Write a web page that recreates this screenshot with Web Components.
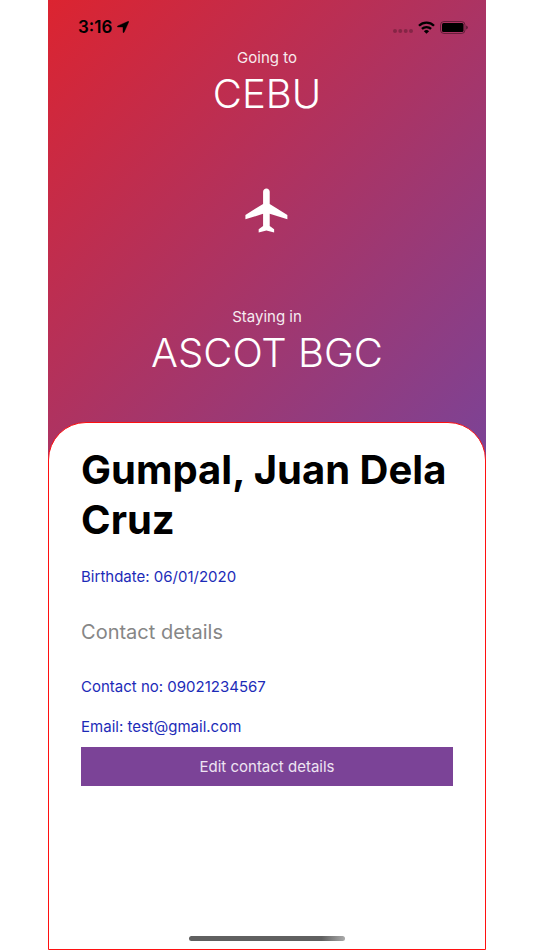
<!DOCTYPE html>
<html lang="en">
<head>
<meta charset="utf-8">
<meta name="viewport" content="width=device-width, initial-scale=1">
<title>Traveller profile</title>
<style>
    body {
        margin: 0;
        background: #fff;
        font-family: Inter, "Liberation Sans", sans-serif;
    }
</style>
</head>
<body>
<phone-screen>
    <trip-header slot="header">
        <status-bar slot="status">3:16</status-bar>
        <trip-place slot="destination">
            <span slot="label">Going to</span>
            <span slot="place">CEBU</span>
        </trip-place>
        <trip-place slot="hotel">
            <span slot="label">Staying in</span>
            <span slot="place">ASCOT BGC</span>
        </trip-place>
    </trip-header>
    <profile-card>
        <span slot="name">Gumpal, Juan Dela Cruz</span>
        <span slot="birthdate">Birthdate: 06/01/2020</span>
        <span slot="heading">Contact details</span>
        <span slot="phone">Contact no: 09021234567</span>
        <span slot="email">Email: test@gmail.com</span>
        <span slot="action">Edit contact details</span>
    </profile-card>
</phone-screen>

<script>
class BaseElement extends HTMLElement {
    constructor() {
        super()
        this.attachShadow({mode: 'open'})
    }

    connectedCallback() {
        const template = document.createElement('template')
        template.innerHTML = this.getStyles() + this.getTemplate()
        this.shadowRoot.replaceChildren(template.content.cloneNode(true))
    }
}

class PhoneScreen extends BaseElement {
    getTemplate() {
        return `
            <slot name="header"></slot>
            <slot></slot>
        `
    }

    getStyles() {
        return `
            <style>
                :host {
                    box-sizing: border-box;
                    display: flex;
                    flex-direction: column;
                    min-height: 100vh;
                    padding: 0 9%;
                }
            </style>
        `
    }
}

class StatusBar extends BaseElement {
    getTemplate() {
        return `
            <div class="time">
                <slot></slot>
                <svg width="12" height="12" viewBox="0 0 12 12" aria-hidden="true">
                    <path d="M11.3.3Q12 .2 11.7 1L7.1 11.3Q6.5 12.3 6 11.2V6.5Q6 6 5.500 6H.8Q-.3 5.500.7 4.900Z" stroke="#000" stroke-width=".4"/>
                </svg>
            </div>
            <div class="icons">
                <svg width="20" height="4" viewBox="0 0 20 4" fill-opacity=".25" aria-hidden="true">
                    <circle cx="2" cy="2" r="2"/>
                    <circle cx="7.300" cy="2" r="2"/>
                    <circle cx="12.700" cy="2" r="2"/>
                    <circle cx="18" cy="2" r="2"/>
                </svg>
                <svg class="wifi" width="17" height="13" viewBox="0 0 17 13" aria-hidden="true">
                    <g fill="none" stroke="#000" stroke-width="2.300">
                        <path d="M1 4.700C5.200.5 11.800.5 16 4.700"/>
                        <path d="M3.900 7.900C6.500 5.400 10.500 5.400 13.100 7.900"/>
                    </g>
                    <path d="M8.500 12.800L5.900 10.200Q8.500 8 11.100 10.200Z"/>
                </svg>
                <svg class="battery" width="28" height="13" viewBox="0 0 28 13" aria-hidden="true">
                    <rect x=".5" y=".5" width="24.500" height="12" rx="3.500" fill="none" stroke="#000" stroke-opacity=".4"/>
                    <rect x="2" y="2" width="21.500" height="9" rx="1.500"/>
                    <path d="M26.200 4.500Q27.800 5 27.800 6.500T26.200 8.500Z" fill-opacity=".5"/>
                </svg>
            </div>
        `
    }

    getStyles() {
        return `
            <style>
                :host {
                    display: flex;
                    justify-content: space-between;
                    align-items: center;
                    padding: 8px 18px 0 30px;
                    height: 38px;
                    color: #000;
                }

                .time, .icons {
                    display: flex;
                    align-items: center;
                    gap: 5px;
                }

                .time {
                    font-size: 17px;
                    font-weight: 600;
                }

                .icons svg:first-child {
                    margin-top: 8px;
                }
            </style>
        `
    }
}

class TripPlace extends BaseElement {
    getTemplate() {
        return `
            <p class="label"><slot name="label"></slot></p>
            <p class="place"><slot name="place"></slot></p>
        `
    }

    getStyles() {
        return `
            <style>
                :host {
                    display: block;
                    text-align: center;
                    color: #fff;
                }

                p {
                    margin: 0;
                }

                .label {
                    font-size: 15px;
                    line-height: 24px;
                    opacity: .9;
                }

                .place {
                    font-size: 40px;
                    font-weight: 350;
                    line-height: 47px;
                }
            </style>
        `
    }
}

class TripHeader extends BaseElement {
    getTemplate() {
        return `
            <slot name="status"></slot>
            <slot name="destination"></slot>
            <svg class="plane" width="53" height="53" viewBox="0 0 24 24" fill="#fff" aria-hidden="true">
                <path d="M21 16v-2l-8-5V3.500c0-.83-.67-1.500-1.500-1.500S10 2.670 10 3.500V9l-8 5v2l8-2.500V19l-2 1.500V22l3.500-1 3.500 1v-1.500L13 19v-5.500l8 2.500z"/>
            </svg>
            <slot name="hotel"></slot>
        `
    }

    getStyles() {
        return `
            <style>
                :host {
                    display: flex;
                    flex-direction: column;
                    padding-bottom: 86px;
                    background: linear-gradient(to bottom right, #dc2430, #7b4397);
                }

                .plane {
                    align-self: center;
                    margin: 67px 0 68px;
                }
            </style>
        `
    }
}

class HomeIndicator extends BaseElement {
    getTemplate() {
        return ''
    }

    getStyles() {
        return `
            <style>
                :host {
                    display: block;
                    width: 156px;
                    height: 5px;
                    border-radius: 3px;
                    background: linear-gradient(to right, #606060 85%, #aaa);
                }
            </style>
        `
    }
}

class ProfileCard extends BaseElement {
    getTemplate() {
        return `
            <h1><slot name="name"></slot></h1>
            <p class="birthdate"><slot name="birthdate"></slot></p>
            <h2><slot name="heading"></slot></h2>
            <p class="phone"><slot name="phone"></slot></p>
            <p><slot name="email"></slot></p>
            <button type="button"><slot name="action"></slot></button>
            <home-indicator></home-indicator>
        `
    }

    getStyles() {
        return `
            <style>
                :host {
                    box-sizing: border-box;
                    display: flex;
                    flex: 1;
                    flex-direction: column;
                    margin-top: -40px;
                    padding: 22px 32px 8px;
                    border: 1px solid #ff1010;
                    border-radius: 38px 38px 0 0;
                    background: #fff;
                }

                h1 {
                    margin: 0 0 20px;
                    font-size: 40px;
                    font-weight: 700;
                    line-height: 50px;
                    color: #000;
                }

                h2 {
                    margin: 0 0 28px;
                    font-size: 20px;
                    font-weight: 400;
                    line-height: 30px;
                    color: #868686;
                }

                p {
                    margin: 0 0 8px;
                    font-size: 15px;
                    line-height: 24px;
                    color: #1c2bb8;
                }

                .birthdate {
                    margin-bottom: 28px;
                }

                .phone {
                    margin-bottom: 16px;
                }

                button {
                    height: 39px;
                    padding: 0;
                    border: 0;
                    background: #7b4397;
                    color: #eee4f2;
                    font: inherit;
                    font-size: 15px;
                }

                home-indicator {
                    align-self: center;
                    margin-top: auto;
                }
            </style>
        `
    }
}

customElements.define('phone-screen', PhoneScreen)
customElements.define('status-bar', StatusBar)
customElements.define('trip-place', TripPlace)
customElements.define('trip-header', TripHeader)
customElements.define('home-indicator', HomeIndicator)
customElements.define('profile-card', ProfileCard)
</script>
</body>
</html>
